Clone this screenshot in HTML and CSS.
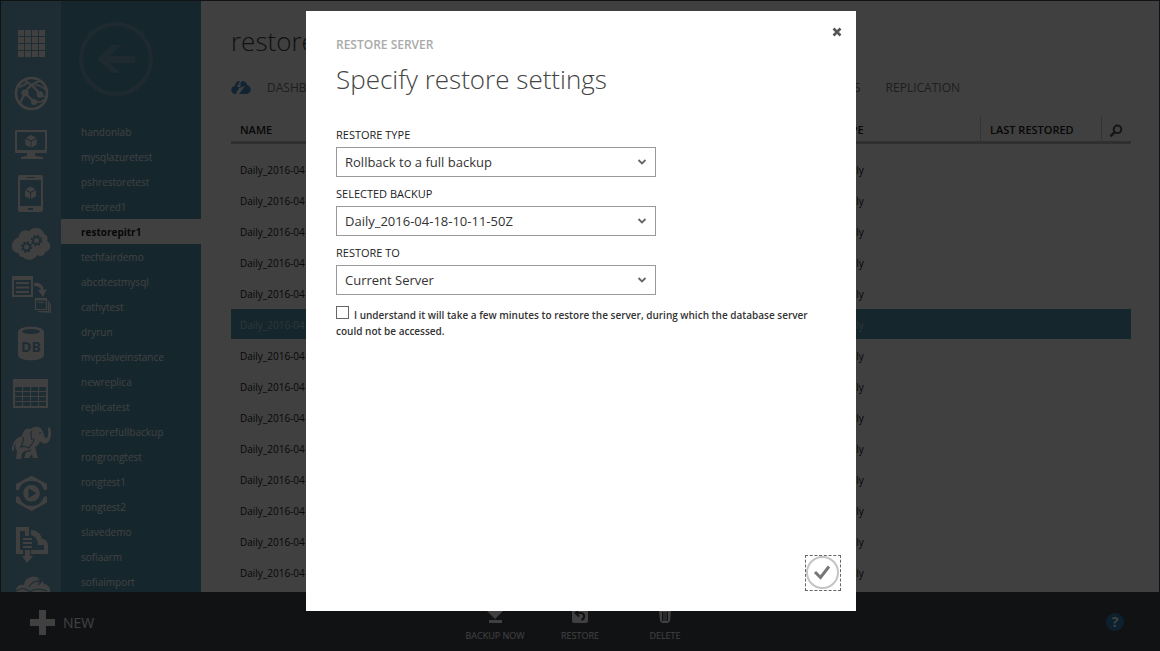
FILE: index.html
```html
<!DOCTYPE html>
<html lang="en">
<head>
<meta charset="utf-8">
<title>Restore server</title>
<link rel="stylesheet" href="styles.css">
</head>
<body>
<svg class="defs" aria-hidden="true">
  <symbol id="cube" viewBox="0 0 12 14">
    <path d="M6 0l5.4 2.9L6 5.8.6 2.900z M0 4l5.500 3v6.500L0 10.500z M12 4L6.500 7v6.500l5.500-3z"/>
  </symbol>
  <symbol id="chevron" viewBox="0 0 10 8">
    <path d="M1.500 2L5 5.500 8.500 2" fill="none" stroke="#666" stroke-width="1.800"/>
  </symbol>
</svg>

<div class="portal">
  <div class="workspace">
    <nav class="rail" aria-label="Services">
      <a href="#" aria-label="All items"><svg viewBox="0 0 40 40"><path d="M7 7h6v6H7zM14 7h6v6h-6zM21 7h6v6h-6zM28 7h6v6h-6zM7 14h6v6H7zM14 14h6v6h-6zM21 14h6v6h-6zM28 14h6v6h-6zM7 21h6v6H7zM14 21h6v6h-6zM21 21h6v6h-6zM28 21h6v6h-6zM7 28h6v6H7zM14 28h6v6h-6zM21 28h6v6h-6zM28 28h6v6h-6z"/></svg></a>
      <a href="#" aria-label="Web sites"><svg viewBox="0 0 40 40"><g fill="none" stroke="currentColor"><circle cx="20.500" cy="20.500" r="15.500" stroke-width="2.600"/><path d="M14 20C17 14 22 10 29 8M14 20L9 30M15 21l8 8M14 8c6 3 11 7 15 14M8 14c5-1 7-3 9-6" stroke-width="2.200"/><path d="M29 22l6 2M23 29c5 1 8 0 11-3M24 12c5 0 8 2 11 5" stroke-width="1.500"/></g><circle cx="14" cy="20" r="3.600"/><circle cx="29" cy="21.500" r="3.200"/><circle cx="23" cy="29" r="3"/></svg></a>
      <a href="#" aria-label="Virtual machines"><svg viewBox="0 0 40 40"><path d="M5 7h30a1 1 0 011 1v21a1 1 0 01-1 1H5a1 1 0 01-1-1V8a1 1 0 011-1zm1 2v18h28V9zM16 30h8v3l8 1v2H10v-2l6-1z" fill-rule="evenodd"/><use href="#cube" x="14" y="12" width="12" height="13"/></svg></a>
      <a href="#" aria-label="Mobile services"><svg viewBox="0 0 40 40"><path d="M9 2h21a2 2 0 012 2v33a2 2 0 01-2 2H9a2 2 0 01-2-2V4a2 2 0 012-2zm0 5v26h21V7zm7-3v1h8V4zm1 31v2h5v-2z" fill-rule="evenodd"/><use href="#cube" x="14" y="13" width="11" height="14"/></svg></a>
      <a href="#" aria-label="Cloud services"><svg viewBox="0 0 40 40"><path d="M8 14c0-6 6-8 10-6 4-5 14-4 15 3 4 1 4 5 3 7 5 3 4 10-2 11 0 4-5 5-8 3-3 6-11 6-14 2-4 0-4-2-4-4-9 0-10-12 0-16z"/><g class="hole"><circle cx="15.500" cy="24" r="3.500" stroke-width="2"/><circle cx="15.500" cy="24" r="5" stroke-width="1.500" stroke-dasharray="2 1.930"/><circle cx="25.500" cy="17.500" r="3.500" stroke-width="2"/><circle cx="25.500" cy="17.500" r="5" stroke-width="1.500" stroke-dasharray="2 1.930"/></g></svg></a>
      <a href="#" aria-label="SQL import"><svg viewBox="0 0 40 40"><path d="M1 3h21v21H1zm2 4v15h17V7zm2 2h13v2H5zm0 4.500h13v2H5zm0 4.500h13v2H5z" fill-rule="evenodd"/><path d="M23 10c6-1 9 2 10 7l3-1-4 8-5-7h3c-1-3-3-4-7-4z"/><path d="M24.500 25.500h11v11h-11zM27 29.500h6M37.500 28v10.500H27M39.300 30v10H30" fill="none" stroke="currentColor" stroke-width="1.200"/><path d="M24.500 25.500h11v2h-11z"/></svg></a>
      <a href="#" aria-label="SQL databases"><svg viewBox="0 0 40 40"><path d="M7 9c0-7 26-7 26 0v23c0 7-26 7-26 0z"/><ellipse class="cap" cx="20" cy="8.500" rx="9" ry="2.600"/><text class="db" x="20" y="29" text-anchor="middle">DB</text></svg></a>
      <a href="#" aria-label="Tables"><svg viewBox="0 0 40 40"><path d="M2 6h35v29H2zm2 8v4h7v-4zm8 0v4h7v-4zm8 0v4h7v-4zm8 0v4h7v-4zM4 19v4h7v-4zm8 0v4h7v-4zm8 0v4h7v-4zm8 0v4h7v-4zM4 24v4h7v-4zm8 0v4h7v-4zm8 0v4h7v-4zm8 0v4h7v-4zM4 29v4h7v-4zm8 0v4h7v-4zm8 0v4h7v-4zm8 0v4h7v-4z" fill-rule="evenodd"/></svg></a>
      <a href="#" aria-label="HDInsight"><svg viewBox="0 0 40 40"><path d="M11 13c1-6 5-9 9-7 3-3 9-3 11 1 2 3 2 8 4 8 3 0 2-5 2-10l2-1c2 6 1 14-3 16-3 1-5 0-7-2-1 3-2 5-5 6 2 4 1 7 3 11h-5l-1-4-3 4h-5l2-6-4 1-1 6H5l1-8c-2-3-2-6-1-8-2 1-2 4-2 7l-2 1c0-5 1-12 10-15z"/><path class="cut" d="M12 14c1 5-1 7-2 10 3-2 5 0 8 1 2-4 5-4 5-9M21 8c-3 3 0 6 0 9M29 9v2M12 30c2-2 5-1 8-3"/></svg></a>
      <a href="#" aria-label="Media services"><svg viewBox="0 0 40 40"><path d="M20.500 2.700L36 11v6h-3C31 10 26 8 20.500 8S10 10 8 17H5v-6zM20.500 38L5 29.500v-6h3C10 30 15 33 20.500 33S31 30 33 23.500h3v6z"/><path d="M20.500 12a8.300 8.300 0 110 16.600 8.300 8.300 0 010-16.600zm-3 3.300v10l8-5z" fill-rule="evenodd"/></svg></a>
      <a href="#" aria-label="Storage import"><svg viewBox="0 0 40 40"><path d="M5 4h13v9h-4V8H9v19h3v4H5zM20 7c6 0 10 4 11 9 5 0 6 4 6 8v7H20v-4h13v-5h-6c0-6-3-9-7-10zM12 15h9v2h-9zm0 4h9v2h-9zm0 4h9v2h-9zM14 27h5v6h3l-6 7-5-7h3z"/></svg></a>
      <a href="#" aria-label="Cloud backup"><svg viewBox="0 0 40 40"><path d="M13 12C14 5 20 3 25 4s7 4 8 7c7 1 8 9 3 13H8c-6-6-2-14 5-12z"/><path class="cut" d="M18 14c3-6 8-6 13-6M27 5l4 3-4 4M5 18c6-4 11-2 14 1 4-4 9-4 17-1"/></svg></a>
    </nav>

    <aside class="servers">
      <button class="back" type="button" aria-label="Back">
        <svg viewBox="0 0 74 74"><circle cx="37" cy="37" r="35" fill="none" stroke="currentColor" stroke-width="4"/><path d="M18 37l15-14h9L30 34h26v7H30l12 10h-9z"/></svg>
      </button>
      <ul>
        <li><a href="#">handonlab</a></li>
        <li><a href="#">mysqlazuretest</a></li>
        <li><a href="#">pshrestoretest</a></li>
        <li><a href="#">restored1</a></li>
        <li class="current"><a href="#" aria-current="page">restorepitr1</a></li>
        <li><a href="#">techfairdemo</a></li>
        <li><a href="#">abcdtestmysql</a></li>
        <li><a href="#">cathytest</a></li>
        <li><a href="#">dryrun</a></li>
        <li><a href="#">mvpslaveinstance</a></li>
        <li><a href="#">newreplica</a></li>
        <li><a href="#">replicatest</a></li>
        <li><a href="#">restorefullbackup</a></li>
        <li><a href="#">rongrongtest</a></li>
        <li><a href="#">rongtest1</a></li>
        <li><a href="#">rongtest2</a></li>
        <li><a href="#">slavedemo</a></li>
        <li><a href="#">sofiaarm</a></li>
        <li><a href="#">sofiaimport</a></li>
      </ul>
    </aside>

    <main class="content">
      <h1>restore</h1>
      <nav class="tabs" aria-label="Sections">
        <a href="#" aria-label="Quick start"><svg class="quick" viewBox="0 0 20 14"><path d="M4 5C4 2 6 0 9 0L6 6h3l-4 6 1 1H4C-1 12-1 6 4 5zM11 0c3 0 5 2 5 4 5 1 5 8 0 9H8l6-8-3 1-2 1 1-4-2 1z"/></svg></a>
        <a href="#">DASHBOARD</a>
        <a class="push" href="#">BACKUPS</a>
        <a href="#">REPLICATION</a>
      </nav>
      <table class="backups">
        <colgroup><col><col class="c-type"><col class="c-last"><col class="c-find"></colgroup>
        <thead>
          <tr><th>NAME</th><th>TYPE</th><th class="ruled">LAST RESTORED</th><th class="ruled find"><button type="button" aria-label="Search"><svg viewBox="0 0 14 14"><circle cx="8.500" cy="5.300" r="3.800" fill="none" stroke="currentColor" stroke-width="2"/><path d="M5.600 8.200L1.500 12.300" stroke="currentColor" stroke-width="2.600"/></svg></button></th></tr>
        </thead>
        <tbody>
          <tr><td>Daily_2016-04</td><td>Daily</td><td></td><td></td></tr>
          <tr><td>Daily_2016-04</td><td>Daily</td><td></td><td></td></tr>
          <tr><td>Daily_2016-04</td><td>Daily</td><td></td><td></td></tr>
          <tr><td>Daily_2016-04</td><td>Daily</td><td></td><td></td></tr>
          <tr><td>Daily_2016-04</td><td>Daily</td><td></td><td></td></tr>
          <tr class="selected"><td>Daily_2016-04</td><td>Daily</td><td></td><td></td></tr>
          <tr><td>Daily_2016-04</td><td>Daily</td><td></td><td></td></tr>
          <tr><td>Daily_2016-04</td><td>Daily</td><td></td><td></td></tr>
          <tr><td>Daily_2016-04</td><td>Daily</td><td></td><td></td></tr>
          <tr><td>Daily_2016-04</td><td>Daily</td><td></td><td></td></tr>
          <tr><td>Daily_2016-04</td><td>Daily</td><td></td><td></td></tr>
          <tr><td>Daily_2016-04</td><td>Daily</td><td></td><td></td></tr>
          <tr><td>Daily_2016-04</td><td>Daily</td><td></td><td></td></tr>
          <tr><td>Daily_2016-04</td><td>Daily</td><td></td><td></td></tr>
        </tbody>
      </table>
    </main>
  </div>

  <footer class="bar">
    <button class="new" type="button"><svg viewBox="0 0 26 26"><path d="M9 0h7v9h9v7h-9v9H9v-9H0V9h9z"/></svg>NEW</button>
    <div class="commands">
      <button type="button"><svg viewBox="0 0 20 20"><path d="M7 1h6v6h5l-8 8-8-8h5zM4 16h13v3H4z"/></svg>BACKUP NOW</button>
      <button type="button"><svg viewBox="0 0 20 20"><path d="M4 3h12a2 2 0 012 2v12a2 2 0 01-2 2H4a2 2 0 01-2-2V5a2 2 0 012-2z"/><path class="undo" d="M9 5.500L5.500 9 9 12.500M6 9h4.500c4.500 0 5 5 1 7"/></svg>RESTORE</button>
      <button type="button"><svg viewBox="0 0 20 20"><path d="M4 3h12v2H4zm4-2h4v2H8zM4 6h12l-1 11-2 2H7l-2-2zm3 2v9h1.500V8zm2.500 0v9h1V8zm2 0v9H13V8z" fill-rule="evenodd"/></svg>DELETE</button>
    </div>
    <button class="help" type="button" aria-label="Help">?</button>
  </footer>
</div>

<div class="overlay">
  <form class="dialog" role="dialog" aria-labelledby="dialog-title">
    <button class="close" type="button" aria-label="Close"><svg viewBox="0 0 10 10"><path d="M1.500 1.500l7 7M8.500 1.500l-7 7" stroke="#555" stroke-width="2.600"/></svg></button>
    <p class="eyebrow">RESTORE SERVER</p>
    <h2 id="dialog-title">Specify restore settings</h2>
    <div class="field">
      <label for="restore-type">RESTORE TYPE</label>
      <div class="picker"><select id="restore-type"><option>Rollback to a full backup</option></select><svg><use href="#chevron"/></svg></div>
    </div>
    <div class="field">
      <label for="selected-backup">SELECTED BACKUP</label>
      <div class="picker"><select id="selected-backup"><option>Daily_2016-04-18-10-11-50Z</option></select><svg><use href="#chevron"/></svg></div>
    </div>
    <div class="field">
      <label for="restore-to">RESTORE TO</label>
      <div class="picker"><select id="restore-to"><option>Current Server</option></select><svg><use href="#chevron"/></svg></div>
    </div>
    <p class="consent"><input type="checkbox" id="consent"><label for="consent">I understand it will take a few minutes to restore the server, during which the database server could not be accessed.</label></p>
    <button class="submit" type="submit" aria-label="Complete"><svg viewBox="0 0 34 34"><circle cx="16.500" cy="16.500" r="15.500" fill="none" stroke="#c4c4c4" stroke-width="2"/><path d="M9 16l5.500 5.500 8.500-11" fill="none" stroke="#777" stroke-width="3"/></svg></button>
  </form>
</div>
</body>
</html>
```
FILE: styles.css
```css
* { box-sizing: border-box; }
html, body { height: 100%; }
body {
  margin: 0;
  overflow: hidden;
  background: #fff;
  font-family: "Open Sans", "Noto Sans", sans-serif;
  font-size: 11px;
  color: #222;
}
button, select, input { font: inherit; color: inherit; }
button { padding: 0; border: 0; background: none; }
a { color: inherit; text-decoration: none; }
svg { display: block; fill: currentColor; }
.defs { display: none; }

.portal {
  display: flex;
  flex-direction: column;
  height: 100%;
  border: 1px solid #454852;
}
.workspace { display: flex; flex: 1; min-height: 0; overflow: hidden; }

.rail {
  flex: none;
  width: 60px;
  padding-top: 17px;
  background: #78b0cc;
  color: #fff;
}
.rail a { display: grid; place-items: center; height: 50px; }
.rail svg { width: 40px; height: 40px; }
.rail .hole { fill: none; stroke: #78b0cc; }
.rail .cap { fill: #78b0cc; }
.rail .cut { fill: none; stroke: #78b0cc; stroke-width: 1.300; }
.rail .db { fill: #78b0cc; font-size: 14px; font-weight: 700; }

.servers { flex: none; width: 140px; background: #5498b4; color: #fff; font-size: 10px; }
.back { display: block; margin: 21px 0 0 18px; color: #78a8bc; }
.back svg { width: 74px; height: 74px; }
.servers ul { margin: 23px 0 0; padding: 0; list-style: none; }
.servers li { height: 25px; padding: 1px 0 0 20px; line-height: 24px; }
.servers li { line-height: 25px; }
.servers .current { background: #fff; color: #222; font-weight: 700; }

.content { flex: 1; min-width: 0; padding: 20px 28px 0 30px; }
h1 { margin: 0; font-size: 26px; font-weight: 300; line-height: 40px; color: #444; }
.tabs {
  display: flex;
  align-items: center;
  max-width: 729px;
  margin-top: 18px;
  font-size: 12px;
  line-height: 18px;
  color: #777;
}
.tabs a + a { margin-left: 16px; }
.tabs .push { margin-left: auto; }
.tabs .push + a { margin-left: 25px; }
.quick { width: 20px; height: 14px; color: #4a90c8; }

.backups {
  width: 100%;
  margin-top: 19px;
  border-collapse: separate;
  border-spacing: 0;
  table-layout: fixed;
  color: #222;
}
.c-type { width: 151px; }
.c-last { width: 121px; }
.c-find { width: 30px; }
.backups th {
  height: 28px;
  padding: 2px 9px 0;
  border-bottom: 3px solid #bbb;
  font-size: 11px;
  font-weight: 600;
  line-height: 15px;
  text-align: left;
}
.backups .ruled { border-left: 1px solid #ccc; }
.backups .find { padding: 4px 7px 0; color: #555; }
.find button { display: block; }
.find svg { width: 14px; height: 14px; }
.backups td { height: 31px; padding: 2px 9px 0; border-bottom: 1px solid #fff; font-size: 10px; line-height: 16px; white-space: nowrap; }
.backups td + td { padding-left: 12px; }
.backups tbody::before { content: ""; display: block; height: 10px; }
.backups .selected td { background: #5498b4; color: #b8d4e0; }

.bar {
  display: grid;
  grid-template-columns: 1fr auto 1fr;
  flex: none;
  height: 58px;
  background: #454852;
  color: #fff;
}
.new { display: flex; align-items: center; gap: 7px; padding: 3px 0 0 29px; font-size: 14px; }
.new svg { width: 26px; height: 26px; }
.commands { display: flex; align-items: end; font-size: 9px; }
.commands button { display: grid; justify-items: center; gap: 6px; width: 85px; padding-bottom: 8px; line-height: 12px; }
.commands svg { width: 20px; height: 20px; }
.commands .undo { fill: none; stroke: #454852; stroke-width: 2; }
.help {
  justify-self: end;
  align-self: center;
  width: 18px;
  height: 18px;
  margin: 2px 35px 0 0;
  border-radius: 50%;
  background: #3080b8;
  font-size: 14px;
  font-weight: 700;
  line-height: 18px;
}

.overlay {
  position: absolute;
  inset: 0;
  display: flex;
  justify-content: center;
  padding: 11px 0 40px 2px;
  background: rgba(0, 0, 0, 0.75);
}
.dialog {
  position: relative;
  display: flex;
  flex-direction: column;
  align-items: flex-start;
  width: 550px;
  padding: 25px 30px 20px;
  background: #fff;
}
.close { position: absolute; top: 16px; right: 14px; }
.close svg { width: 10px; height: 10px; }
.eyebrow { margin: 0; font-size: 12px; font-weight: 600; line-height: 18px; color: #aaa; }
h2 { margin: 5px 0 27px; font-size: 26px; font-weight: 300; line-height: 40px; color: #444; }
.field { width: 320px; margin-bottom: 8px; }
.field label { display: block; margin-bottom: 4px; font-size: 11px; line-height: 17px; }
.picker { display: grid; align-items: center; }
.picker > * { grid-area: 1 / 1; }
.picker svg { justify-self: end; width: 10px; height: 8px; margin-right: 9px; pointer-events: none; }
.picker select {
  width: 100%;
  height: 30px;
  padding: 0 8px;
  border: 1px solid #999;
  border-radius: 0;
  appearance: none;
  background: #fff;
  font-size: 13px;
  color: #333;
}
.consent { margin: 3px 0 0; font-size: 10px; font-weight: 600; line-height: 16px; color: #333; }
.consent input {
  width: 13px;
  height: 13px;
  margin: 0 5px 0 0;
  border: 1px solid #666;
  appearance: none;
  background: #fff;
}
.submit { align-self: flex-end; margin: auto -15px 0 0; border: 1px dashed #666; }
.submit svg { width: 34px; height: 34px; }
```
